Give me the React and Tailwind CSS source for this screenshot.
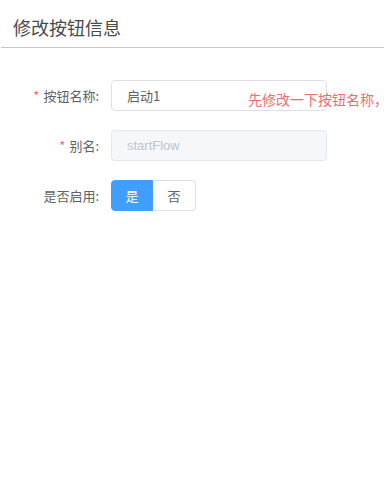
import React, { useState } from 'react';

const font = { fontFamily: '"Noto Sans CJK SC", "Liberation Sans", sans-serif' };

function FormRow({ label, required, children }) {
  return (
    <div className="relative flex items-center h-[31px] mb-[19px]">
      <label className="w-[111px] shrink-0 pr-[12px] text-right text-[13px] text-[#606266]">
        {required && <span className="text-[#f56c6c] mr-[4px]">*</span>}
        {label}
      </label>
      {children}
    </div>
  );
}

export default function App() {
  const [enabled, setEnabled] = useState(true);

  return (
    <div className="w-[384px] h-[489px] bg-white overflow-hidden" style={font}>
      <div className="h-[47px] pl-[13px] pt-[14px] text-[18px] leading-[26px] text-[#4a4a4a]">
        修改按钮信息
      </div>
      <div className="ml-px h-px bg-[#c8c8c8]" />

      <div className="pt-[32px]">
        <FormRow label="按钮名称:" required>
          <div className="w-[216px] h-[31px] border border-[#dcdfe6] rounded-[4px] flex items-center px-[15px] text-[13px] text-[#606266]">
            启动1
          </div>
          <span className="absolute left-[248px] top-[10px] whitespace-nowrap text-[14px] leading-[18px] text-[#f56c6c]">
            先修改一下按钮名称，
          </span>
        </FormRow>

        <FormRow label="别名:" required>
          <div className="w-[216px] h-[31px] border border-[#e4e7ed] bg-[#f5f7fa] rounded-[4px] flex items-center px-[15px] text-[13px] text-[#c0c4cc]" style={{ fontFamily: '"Liberation Sans", "Noto Sans CJK SC", sans-serif' }}>
            startFlow
          </div>
        </FormRow>

        <FormRow label="是否启用:">
          <div className="flex h-[31px] text-[13px]">
            <button
              onClick={() => setEnabled(true)}
              className={
                enabled
                  ? 'w-[42px] h-full rounded-l-[4px] bg-[#409eff] border border-[#409eff] text-white'
                  : 'w-[42px] h-full rounded-l-[4px] bg-white border border-[#dcdfe6] text-[#606266]'
              }
            >
              是
            </button>
            <button
              onClick={() => setEnabled(false)}
              className={
                !enabled
                  ? 'w-[43px] h-full rounded-r-[4px] bg-[#409eff] border border-[#409eff] text-white'
                  : 'w-[43px] h-full rounded-r-[4px] bg-white border border-l-0 border-[#dcdfe6] text-[#606266]'
              }
            >
              否
            </button>
          </div>
        </FormRow>
      </div>
    </div>
  );
}
